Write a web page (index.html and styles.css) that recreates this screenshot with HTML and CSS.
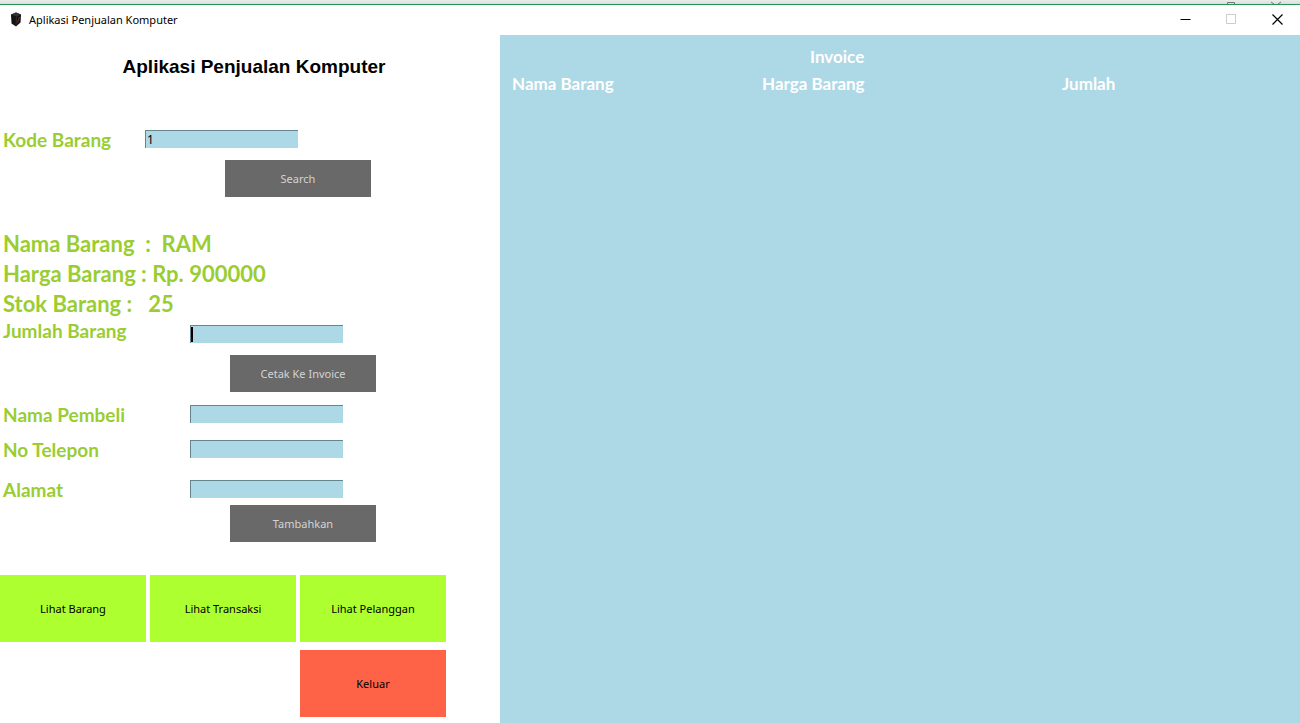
FILE: index.html
```html
<!DOCTYPE html>
<html lang="id">
<head>
<meta charset="utf-8">
<meta name="viewport" content="width=device-width, initial-scale=1">
<title>Aplikasi Penjualan Komputer</title>
<link rel="stylesheet" href="styles.css">
</head>
<body class="window">
<div class="backdrop" aria-hidden="true">
  <svg width="68" height="4" viewBox="0 0 68 4" fill="none" stroke="#777"><path d="M7.500 4V2.500H14.500V4M51 2L54 4M61 2L58 4"/></svg>
</div>
<header class="titlebar">
  <svg class="app-icon" width="12" height="16" viewBox="0 0 12 16" aria-hidden="true">
    <path d="M1 2.500L6 0.500L11 2.500L10.500 10.500L6 14.500L1.500 11.500Z" fill="#151313"/>
    <path d="M1 2.500L6 0.500L11 2.500L6.500 4.500Z" fill="#353232"/>
    <path d="M6.500 4.500L6 14" stroke="#3c3434" stroke-width="0.700"/>
    <path d="M9.500 5L7.500 10.500" stroke="#7c2a26" stroke-width="1"/>
  </svg>
  <span class="caption">Aplikasi Penjualan Komputer</span>
  <div class="controls">
    <button class="control" type="button" aria-label="Minimize"><svg width="11" height="11" viewBox="0 0 11 11"><path d="M0.500 5.500H10.500" stroke="#000"/></svg></button>
    <button class="control" type="button" aria-label="Maximize" disabled><svg width="11" height="11" viewBox="0 0 11 11"><path d="M0.500 0.500H9.500V9.500H0.500Z" fill="none" stroke="#ccc"/></svg></button>
    <button class="control" type="button" aria-label="Close"><svg width="11" height="11" viewBox="0 0 11 11"><path d="M0.500 0.500L10.500 10.500M10.500 0.500L0.500 10.500" stroke="#000" stroke-width="1.200"/></svg></button>
  </div>
</header>
<main class="content">
  <section class="sales">
    <h1 class="heading">Aplikasi Penjualan Komputer</h1>
    <form class="form search">
      <div class="row row-search">
        <label class="label" for="kode">Kode Barang</label>
        <input class="field" id="kode" type="text" value="1">
      </div>
      <button class="action" type="button">Search</button>
    </form>
    <div class="info">
      <p class="item">Nama Barang&nbsp; :&nbsp; RAM</p>
      <p class="item">Harga Barang : Rp. 900000</p>
      <p class="item">Stok Barang :&nbsp;&nbsp; 25</p>
    </div>
    <form class="form">
      <div class="row row-amount">
        <label class="label" for="jumlah">Jumlah Barang</label>
        <input class="field field-active" id="jumlah" type="text">
      </div>
      <button class="action" type="button">Cetak Ke Invoice</button>
    </form>
    <form class="form buyer">
      <div class="row">
        <label class="label" for="nama">Nama Pembeli</label>
        <input class="field" id="nama" type="text">
      </div>
      <div class="row">
        <label class="label" for="telepon">No Telepon</label>
        <input class="field" id="telepon" type="text">
      </div>
      <div class="row row-address">
        <label class="label" for="alamat">Alamat</label>
        <input class="field" id="alamat" type="text">
      </div>
      <button class="action action-add" type="button">Tambahkan</button>
    </form>
    <nav class="menu">
      <button class="tile" type="button">Lihat Barang</button>
      <button class="tile" type="button">Lihat Transaksi</button>
      <button class="tile" type="button">Lihat Pelanggan</button>
      <button class="tile tile-exit" type="button">Keluar</button>
    </nav>
  </section>
  <section class="invoice">
    <h2 class="invoice-title">Invoice</h2>
    <table class="invoice-table">
      <thead>
        <tr><th class="col-name" scope="col">Nama Barang</th><th class="col-price" scope="col">Harga Barang</th><th scope="col">Jumlah</th></tr>
      </thead>
    </table>
  </section>
</main>
</body>
</html>
```
FILE: styles.css
```css
* { box-sizing: border-box; }

.window {
  margin: 0;
  min-height: 100vh;
  display: flex;
  flex-direction: column;
  background: #fff;
  color: #000;
  font: 11px/16px "Noto Sans", sans-serif;
}

.backdrop {
  height: 4px;
  padding-right: 12px;
  display: flex;
  justify-content: flex-end;
  background: linear-gradient(#ececec, #dcdcdc);
}

.titlebar {
  height: 31px;
  padding-left: 10px;
  display: flex;
  align-items: center;
  border-top: 1px solid #219653;
}

.caption { margin-left: 7px; }

.controls {
  margin-left: auto;
  align-self: stretch;
  display: flex;
}

.control {
  width: 46px;
  padding: 0 0 2px;
  display: flex;
  align-items: center;
  justify-content: center;
  border: 0;
  background: none;
}

.content {
  flex: 1;
  display: grid;
  grid-template-columns: 5fr 8fr;
}

.sales { padding-top: 20px; }

.heading {
  margin: 0 0 49px;
  padding-left: 8px;
  font: bold 19px/24px "Liberation Sans", sans-serif;
  text-align: center;
}

.form {
  display: flex;
  flex-direction: column;
  align-items: flex-start;
}

.row {
  height: 20px;
  padding-left: 3px;
  display: grid;
  grid-template-columns: 187px 153px;
  align-items: start;
}

.row-search { grid-template-columns: 142px 153px; }

.label {
  color: #9acd32;
  font: bold 19px/24px Lato, sans-serif;
}

.field {
  width: 100%;
  height: 18px;
  margin-top: 2px;
  padding: 0 1px;
  border: solid #64868c;
  border-width: 1px 0 0 1px;
  border-radius: 0;
  outline: 0;
  background: #add8e6;
  color: #000;
  font: 12px/16px "Noto Sans", sans-serif;
}

.row-amount .field { margin-top: 6px; }

.field-active {
  background: linear-gradient(#000, #000) 0 1px / 2px 15px no-repeat #add8e6;
}

.action {
  width: 146px;
  height: 37px;
  margin: 16px 0 0 230px;
  padding: 0;
  border: 0;
  background: #696969;
  color: #d3d3d3;
  font: 11px/16px "Noto Sans", sans-serif;
}

.search .action { margin: 12px 0 0 225px; }

.info { padding: 32px 0 0 3px; }

.item {
  margin: 0;
  color: #9acd32;
  font: bold 22px/30px Lato, sans-serif;
}

.buyer {
  padding-top: 11px;
  gap: 15px;
}

.row-address { margin-top: 5px; }

.buyer .action-add { margin-top: -8px; }

.menu {
  margin-top: 33px;
  display: grid;
  grid-template-columns: repeat(3, 146px);
  gap: 8px 4px;
}

.tile {
  height: 67px;
  padding: 0;
  border: 0;
  background: #adff2f;
  color: #000;
  font: 11px/16px "Noto Sans", sans-serif;
}

.tile-exit {
  grid-column: 3;
  background: #ff6347;
}

.invoice {
  padding: 8px 12px;
  background: #add8e6;
  color: #fff;
}

.invoice-title {
  margin: 0;
  padding-left: 298px;
  font: bold 17px/27px Lato, sans-serif;
}

.invoice-table {
  width: 100%;
  border-collapse: collapse;
  table-layout: fixed;
  font: bold 17px/27px Lato, sans-serif;
  text-align: left;
}

.invoice-table th { padding: 0; }

.col-name { width: 250px; }

.col-price { width: 300px; }
```
